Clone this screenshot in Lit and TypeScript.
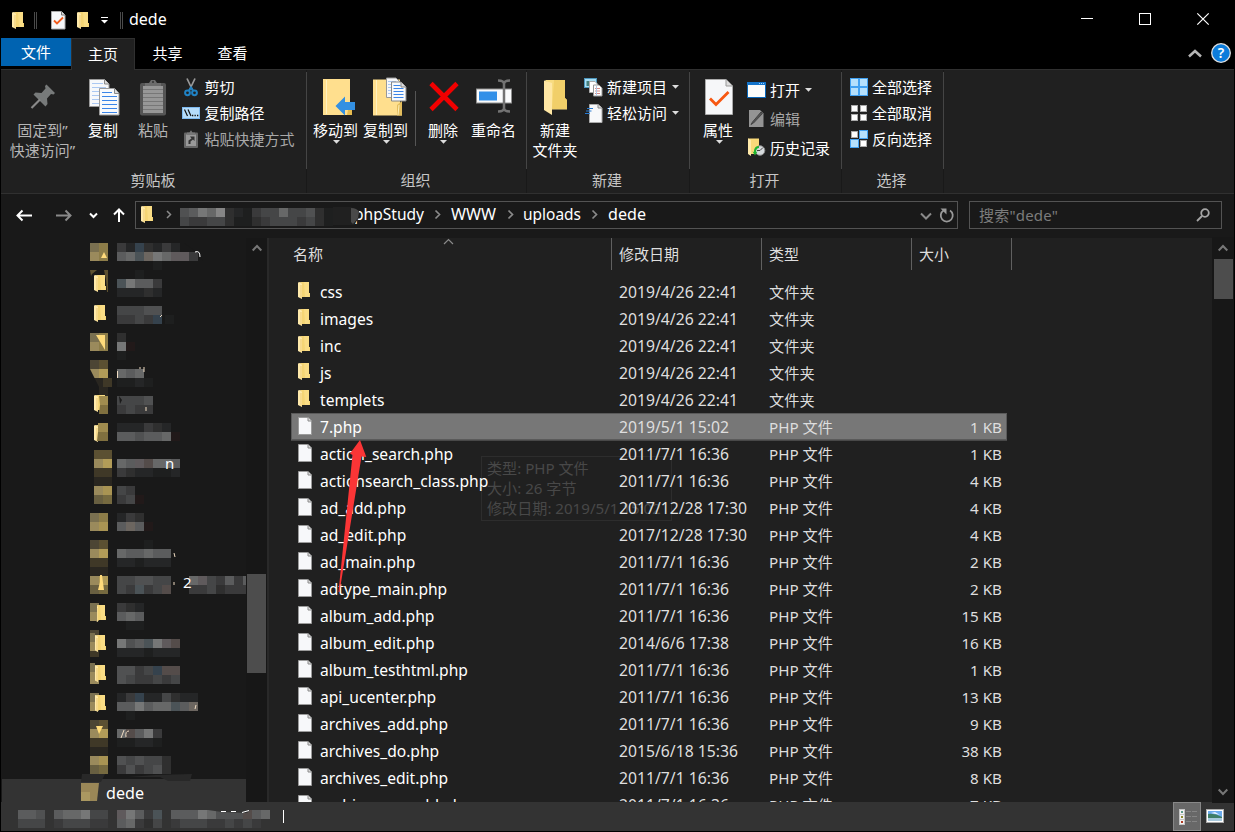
import { LitElement, html, css, svg } from "lit";
import { customElement } from "lit/decorators.js";

type Strip = [number, number, string];

/* Palette for the censor blocks, one letter per 9px cell. */
const TONES: Record<string, string> = {
  a: "#1e1f1f", b: "#252627", c: "#2f2f2f", d: "#3a3a3b", e: "#454647", f: "#505152",
  g: "#5b5c5d", h: "#676868", i: "#767777", j: "#868686",
  r: "#211919", s: "#4b5357", t: "#6c6660", u: "#544c4a", v: "#35424d", w: "#5f5a5c",
  A: "#7a7050", B: "#8d7d49", C: "#9a8a5c", D: "#b29c58", E: "#5b5032", F: "#4c4534",
  G: "#3f3827", H: "#292620", I: "#766a40", J: "#685f41", K: "#a99453",
};

const TREE: Strip[] = [
  [90, 243, "AB"], [90, 252, "CB"], [117, 243, "dbvcbdb"], [117, 252, "ghstihwwd"], [153, 261, "a"],
  [135, 270, "a"], [117, 279, "siggd"], [117, 288, "bbbcb"],
  [117, 306, "eeeff"], [117, 315, "ddedv"], [165, 315, "a"],
  [90, 333, "AB"], [90, 342, "CB"], [117, 333, "c"], [117, 342, "ir"], [117, 351, "a"],
  [90, 360, "FE"], [90, 369, "CD"], [94, 378, "HG"], [99, 387, "H"], [117, 369, "hgh"], [117, 378, "aaba"],
  [99, 396, "D"], [99, 405, "I"], [117, 396, "eeef"], [117, 405, "dedd"],
  [99, 423, "B"], [99, 432, "K"], [117, 423, "bbbdcb"], [117, 432, "ggfgghr"],
  [94, 450, "EE"], [94, 459, "CD"], [94, 468, "GG"], [94, 477, "HH"], [117, 459, "hgwuhhg"], [117, 468, "dcbbaab"],
  [94, 486, "CK"], [94, 495, "JI"], [117, 486, "ed"], [117, 495, "der"],
  [90, 513, "AB"], [90, 522, "CK"], [117, 513, "bdc"], [117, 522, "gtgr"],
  [90, 540, "FE"], [90, 549, "CD"], [90, 558, "GG"], [90, 567, "HH"], [144, 540, "a"], [117, 549, "hgghgg"], [117, 558, "bbabbb"],
  [90, 576, "CD"], [90, 585, "JI"], [117, 576, "eeffee"], [117, 585, "edsdeu"], [189, 576, "hwedgdgu"], [189, 585, "ddecddd"],
  [90, 603, "A"], [90, 612, "C"], [117, 603, "dcb"], [117, 612, "ghg"], [126, 621, "aa"],
  [90, 630, "F"], [90, 639, "C"], [90, 648, "G"], [117, 639, "ifgsiwu"], [117, 648, "bbbabbb"],
  [90, 666, "A"], [90, 675, "C"], [117, 666, "ffdevuu"], [117, 675, "feddede"],
  [90, 693, "A"], [90, 702, "C"], [117, 693, "bdvbbecbb"], [117, 702, "ggighhsgt"], [126, 711, "a"],
  [90, 720, "FE"], [90, 729, "CD"], [90, 738, "GG"], [90, 747, "HH"], [117, 729, "hugid"], [117, 738, "aabba"],
  [90, 756, "CK"], [90, 765, "JI"], [117, 756, "fefeec"], [117, 765, "dfdefc"],
];

const STATUS: Strip[] = [
  [18, 810, "ggf"], [54, 810, "ghhiee"], [117, 810, "wigds"], [171, 810, "gggihfffugh"],
  [18, 819, "eee"], [54, 819, "deeedd"], [117, 819, "ghdce"], [171, 819, "deeeddeded"],
];

const PATH: Strip[] = [
  [180, 208, "fgihjcbadeeheefca"], [180, 217, "eddeecaacdeeedeca"],
];

const cells = (strips: Strip[]) =>
  strips.map(([x, y, row]) =>
    [...row].map((c, i) => svg`<rect x=${x + i * 9} y=${y} width="9" height="9" fill=${TONES[c]}></rect>`));

const folderShape = svg`
  <path d="M2 0H11V11H12V15H3V2Z" fill="#f5d575"></path>
  <path d="M6 0H11V15H7Z" fill="#fadd85"></path>
  <path d="M0 .5L2 0L4 2V17L0 15Z" fill="#ffeaab"></path>
  <path d="M3 3V16" stroke="#e9bf58" stroke-width=".7"></path>`;

const folder = html`<svg width="12" height="17" viewBox="0 0 12 17">${folderShape}</svg>`;
const page = html`<svg width="14" height="18" viewBox="0 0 14 18">
  <path d="M.5 .5H10L13.500 4V17.500H.5Z" fill="#f7f8fa" stroke="#9b9b9b"></path>
  <path d="M10 .5V4H13.500" fill="#ddd" stroke="#8a8a8a"></path></svg>`;

const lines = (x: number, y: number, w: number, n: number, step: number, c: string) =>
  Array.from({ length: n }, (_, i) => svg`<path d="M${x} ${y + i * step}h${w}" stroke=${c}></path>`);

const icons = {
  pin: html`<svg width="26" height="26" viewBox="0 0 26 26"><path d="M16.500 .5L25 9L23.500 10.500L21 10L17 14.500L17.500 20L15.500 22.500L3.500 10.500L5.500 8.500L11.500 9L15.500 4.500L15 2Z" fill="#777a7a"></path><path d="M10 15.500L1.500 24" stroke="#898989" stroke-width="2.200"></path></svg>`,
  copy: html`<svg width="31" height="37" viewBox="0 0 31 37">
    <path d="M.5 .5H15.500L20 5V27.500H.5Z" fill="#f7f8fa" stroke="#9b9b9b"></path><path d="M15.500 .5V5H20" fill="#ddd" stroke="#888"></path>${lines(3, 4.5, 11, 1, 4, "#abc8f2")}${lines(3, 8.5, 14, 5, 4, "#abc8f2")}
    <path d="M10.500 9.500H25.500L30 14.500V36H10.500Z" fill="#f9fafc" stroke="#9b9b9b"></path>${lines(13, 13.5, 10, 1, 4, "#3b85e8")}${lines(13, 17.5, 15, 5, 4, "#3b85e8")}
    <path d="M25.500 9.500V14.500H30" fill="#ddd" stroke="#888"></path></svg>`,
  paste: html`<svg width="28" height="37" viewBox="0 0 28 37"><rect x="1" y="4" width="26" height="32.500" rx="2" fill="#555"></rect>
    <rect x="4" y="7" width="20" height="27" fill="#979797"></rect>${lines(4, 10.5, 20, 6, 4, "#777")}
    <path d="M6 7V4H10L12 1H16L18 4H22V7Z" fill="#6c6c6c"></path><circle cx="14" cy="3" r="1" fill="#333"></circle></svg>`,
  cut: html`<svg width="18" height="19" viewBox="0 0 18 19"><path d="M5 .5L10.500 12M13 .5L7.500 12" stroke="#999" stroke-width="1.700"></path>
    <circle cx="5.500" cy="14.800" r="2.400" fill="none" stroke="#2082c4" stroke-width="2"></circle><circle cx="12.500" cy="14.800" r="2.400" fill="none" stroke="#2082c4" stroke-width="2"></circle><path d="M7 12.500L9 9.500L11 12.500" fill="none" stroke="#2082c4" stroke-width="2"></path></svg>`,
  path: html`<svg width="18" height="12" viewBox="0 0 18 12"><rect x=".5" y=".5" width="17" height="11" fill="#b5dcfa" stroke="#7fbaf0"></rect><path d="M2.500 2.500L5.500 9M6 2.500L9 9" stroke="#111" stroke-width="1.200"></path><path d="M10 8.500h1.300M12.500 8.500h1.300M15 8.500h1.300" stroke="#111" stroke-width="1.300"></path></svg>`,
  shortcut: html`<svg width="14" height="18" viewBox="0 0 14 18"><rect x="0" y="2.500" width="14" height="15.500" rx="1" fill="#666"></rect><rect x="2" y="4.500" width="10" height="11.500" fill="#999"></rect><path d="M3 5V2.500H5.500L7 .3L8.500 2.500H11V5Z" fill="#777"></path><path d="M4.500 14V10.500L7.500 8.500L6 6.500H10.500V11L9 9.500L6.500 11.500V14Z" fill="#333"></path></svg>`,
  move: html`<svg width="33" height="38" viewBox="0 0 33 38"><path d="M0 37V1H27V26H29V37Z" fill="#ffdf8e"></path><path d="M3.500 2V36" stroke="#fff0c0"></path><path d="M26 26L29 24V37H24Z" fill="#e7bc50"></path><path d="M12.500 28L22 18.500V24H32V32H22V37.500Z" fill="#3390e2"></path></svg>`,
  copyto: html`<svg width="34" height="40" viewBox="0 0 34 40"><path d="M0 38.500V2.500H27V27H29V38.500Z" fill="#ffdf8e"></path><path d="M3.500 3V38" stroke="#fff0c0"></path><path d="M24 38.500V28L29 24V38.500Z" fill="#e3bd5d"></path><path d="M25 38L26 28" stroke="#fff0b9"></path>
    <path d="M13.500 1H23L28 6V20.500H13.500Z" fill="#f7f8fa" stroke="#999"></path>${lines(15, 4.5, 8, 5, 3, "#abc8f2")}
    <path d="M18.500 5H28L33 10V24H18.500Z" fill="#f8fafc" stroke="#888"></path>${lines(20.5, 8.5, 7, 1, 3, "#3b85e8")}${lines(20.5, 11.5, 10, 4, 3, "#3b85e8")}<path d="M28 5V10H33" fill="#ddd" stroke="#888"></path></svg>`,
  remove: html`<svg width="30" height="31" viewBox="0 0 30 31"><path d="M2 2.500L28 28.500M28 2.500L2 28.500" stroke="#f10000" stroke-width="4.600"></path></svg>`,
  rename: html`<svg width="37" height="34" viewBox="0 0 37 34"><rect x=".5" y="10" width="35" height="14" fill="#fafbfc" stroke="#8f8f8f"></rect><rect x="3" y="12.500" width="18" height="9" fill="#3290e8"></rect><path d="M22 1.500Q28 1.500 28 5Q28 1.500 34 1.500M28 4V30M22 32.500Q28 32.500 28 29Q28 32.500 34 32.500" fill="none" stroke="#737373" stroke-width="2.500"></path></svg>`,
  newfolder: html`<svg width="23" height="35" viewBox="0 0 23 35"><path d="M1 0H21V18L23 20V29.500H7V8Z" fill="#f8dc80"></path><path d="M10 0H21V18L23 20V29H8Z" fill="#f1cf69"></path><path d="M0 .5L8 3V35L0 30Z" fill="#ffe7a4"></path></svg>`,
  newitem: html`<svg width="19" height="19" viewBox="0 0 19 19"><rect x=".5" y=".5" width="12" height="9" fill="#a6def5" stroke="#4e97bd"></rect><rect x="2.500" y="3" width="5" height="5" fill="#457e7a"></rect><path d="M5.500 3.500H11L13.500 6V14.500H5.500Z" fill="#fff" stroke="#aaa"></path><path d="M9.500 7H15L18 10V18H9.500Z" fill="#fff" stroke="#999"></path>${lines(11, 10.5, 5, 3, 2.5, "#d58f8a")}<path d="M12.500 8V18" stroke="#b2c8e6"></path></svg>`,
  easy: html`<svg width="18" height="19" viewBox="0 0 18 19"><path d="M4.500 .5H13L17 4V18.500H4.500Z" fill="#f7f8fa" stroke="#aaa"></path><path d="M13 .5V4H17" fill="#ddd" stroke="#888"></path><path d="M2 4.500H8M1 7H6.500M0 9.500H5" stroke="#287ad0" stroke-width="1.200"></path></svg>`,
  props: html`<svg width="28" height="36" viewBox="0 0 28 36"><path d="M.5 .5H21L27.500 7V35.500H.5Z" fill="#f6f7f9" stroke="#aaa"></path><path d="M21 .5V7H27.500" fill="#ddd" stroke="#999"></path><path d="M5 19.500L11 25.500L23.500 13" fill="none" stroke="#f75812" stroke-width="2.800"></path></svg>`,
  smallprops: html`<svg width="15" height="19" viewBox="0 0 15 19"><path d="M.5 .5H10.500L14 4V18H.5Z" fill="#f6f7f9" stroke="#aaa"></path><path d="M10.500 .5V4H14" stroke="#777" fill="#ddd"></path><path d="M3 9.500L6 12.500L12 6.500" fill="none" stroke="#f25c1d" stroke-width="1.800"></path></svg>`,
  open: html`<svg width="19" height="16" viewBox="0 0 19 16"><rect x=".5" y=".5" width="18" height="15" fill="#fdfdfa" stroke="#0967b9"></rect><path d="M0 1.500H19" stroke="#1474c9" stroke-width="3"></path><path d="M12 1.500h1M14 1.500h1M16 1.500h1" stroke="#9bd1ff"></path></svg>`,
  edit: html`<svg width="17" height="19" viewBox="0 0 17 19"><path d="M1 1H12L15.500 4.500V18H1Z" fill="#949494"></path><path d="M14.500 4.500L5.500 14L3 15.500L4.500 13L13 3Z" fill="#555" stroke="#444"></path></svg>`,
  history: html`<svg width="18" height="19" viewBox="0 0 18 19"><path d="M0 .5H11V16H4L0 16Z" fill="#f9d979"></path><path d="M0 .5L3 2V18L0 16Z" fill="#ffeaaa"></path><circle cx="12" cy="12.500" r="4.800" fill="#d6dadd" stroke="#888"></circle><path d="M12 12.500L15 9.500M12 12.500H9" stroke="#444"></path><path d="M11 8C7 8 6 11 6 14L4.500 13.500L7 17.500L9.500 13.500L8 14C8 12 9 10 11 10Z" fill="#20b52f"></path></svg>`,
};

const squares = (on: boolean[]) => html`<svg width="18" height="18" viewBox="0 0 18 18">${on.map((v, i) => {
  const x = (i % 2) * 9, y = (i >> 1) * 9;
  return v
    ? svg`<rect x=${x + 0.5} y=${y + 0.5} width="8" height="8" fill="#b5e0fc" stroke="#42a1f1"></rect>`
    : svg`<rect x=${x + 1.5} y=${y + 1.5} width="6" height="6" fill="#fdfdfd" stroke="#aaa"></rect>`;
})}</svg>`;

const caret = html`<svg class="caret" width="7" height="4" viewBox="0 0 7 4"><path d="M0 0H7L3.500 3.700Z" fill="#ddd"></path></svg>`;
const chevron = (w: number, h: number, d: string, c: string, s = 1.5) =>
  html`<svg width=${w} height=${h} viewBox="0 0 ${w} ${h}"><path d=${d} fill="none" stroke=${c} stroke-width=${s}></path></svg>`;
const up = (c = "#777", s = 2) => chevron(10, 8, "M.7 6.500L5 2L9.300 6.500", c, s);

const FILES: [string, string, string?][] = [
  ["css", "2019/4/26 22:41"], ["images", "2019/4/26 22:41"], ["inc", "2019/4/26 22:41"],
  ["js", "2019/4/26 22:41"], ["templets", "2019/4/26 22:41"],
  ["7.php", "2019/5/1 15:02", "1 KB"], ["action_search.php", "2011/7/1 16:36", "1 KB"],
  ["actionsearch_class.php", "2011/7/1 16:36", "4 KB"], ["ad_add.php", "2017/12/28 17:30", "4 KB"],
  ["ad_edit.php", "2017/12/28 17:30", "4 KB"], ["ad_main.php", "2011/7/1 16:36", "2 KB"],
  ["adtype_main.php", "2011/7/1 16:36", "2 KB"], ["album_add.php", "2011/7/1 16:36", "15 KB"],
  ["album_edit.php", "2014/6/6 17:38", "16 KB"], ["album_testhtml.php", "2011/7/1 16:36", "1 KB"],
  ["api_ucenter.php", "2011/7/1 16:36", "13 KB"], ["archives_add.php", "2011/7/1 16:36", "9 KB"],
  ["archives_do.php", "2015/6/18 15:36", "38 KB"], ["archives_edit.php", "2011/7/1 16:36", "8 KB"],
  ["archives_sg_add.php", "2011/7/1 16:36", "7 KB"],
];

const big = (cls: string, icon: unknown, label: unknown, arrow = false) =>
  html`<div class="big ${cls}"><div class="pic">${icon}</div><div class="cap">${label}</div>${arrow ? caret : ""}</div>`;
const small = (icon: unknown, label: string, arrow = false, dim = false) =>
  html`<div class="small ${dim ? "dim" : ""}"><span class="sico">${icon}</span><span>${label}</span>${arrow ? caret : ""}</div>`;

@customElement("app-root")
export class AppRoot extends LitElement {
  static styles = css`
    :host { display: block; width: 1235px; height: 832px; }
    * { box-sizing: border-box; }
    svg { display: block; flex: none; overflow: visible; }
    .win { position: relative; width: 1235px; height: 832px; overflow: hidden; background: #000; color: #fff; padding: 0 1px 1px; display: flex; flex-direction: column; font: 15px/20px "Noto Sans", "Noto Sans CJK SC", sans-serif; white-space: nowrap; }
    .lat { font-size: 16px; }
    .title { height: 38px; display: flex; align-items: center; padding: 2px 25px 0 11px; }
    .vbar { width: 3px; height: 17px; border: 1px solid #4a4a4a; border-width: 0 1px; margin-right: -1px; }
    .quick { display: flex; align-items: center; height: 100%; flex: 1; }
    .quick .lat { padding-bottom: 2px; }
    .q1 { margin-left: 10px; } .q2 { margin-left: 15px; } .q3 { margin: 0 12px 0 11px; } .q4 { margin: 0 6px 0 12px; }
    .controls { display: flex; align-items: center; gap: 46px; padding-bottom: 2px; }
    .tabs { height: 32px; display: flex; border-bottom: 1px solid #303030; }
    .tab { display: flex; align-items: center; justify-content: center; width: 65px; height: 32px; padding-bottom: 3px; }
    .tab.file { width: 70px; height: 28px; background: #0063b1; padding: 0; }
    .tab.home { width: 64px; background: #202020; border: 1px solid #303030; border-bottom: 0; padding-bottom: 2px; }
    .help { margin-left: auto; display: flex; align-items: center; gap: 9px; padding: 0 3px 1px 0; }
    .ribbon { height: 124px; background: #202020; border-bottom: 1px solid #303030; display: flex; }
    .group { height: 123px; display: flex; flex-direction: column; position: relative; border-right: 1px solid #191919; padding-top: 4px; }
    .group::after { content: ""; position: absolute; right: -1px; top: 2px; width: 1px; height: 97px; background: #454545; }
    .body { height: 96px; display: flex; }
    .glabel { text-align: center; color: #c6c6c6; height: 20px; padding-right: 2px; }
    .g1 { width: 306px; } .g2 { width: 220px; padding-left: 4px; } .g3 { width: 163px; } .g4 { width: 152px; } .g5 { width: 102px; }
    .g1 .glabel { padding-right: 1px; }
    .g2 .glabel { margin-left: -4px; }
    .big { width: 50px; display: flex; flex-direction: column; align-items: center; position: relative; text-align: center; }
    .pic { height: 46px; display: flex; align-items: center; }
    .big .caret { position: absolute; top: 66px; left: 50%; margin-left: -3px; }
    .pinb { width: 77px; padding-left: 6px; color: #b5b5b5; }
    .copyb .pic { padding-left: 2px; }
    .pasteb { color: #b5b5b5; }
    .moveb .pic { padding-left: 6px; } .copytob .pic { padding: 0 0 1px 8px; }
    .delb { width: 50px; margin-left: 2px; } .renb { width: 51px; }
    .delb .pic, .renb .pic { padding: 0 0 2px 1px; }
    .moveb .cap { margin-left: -1px; } .copytob .cap { margin-left: -1px; }
    .newb { width: 57px; }
    .newb .pic { padding-left: 0; }
    .newb .cap { margin-left: -1px; }
    .propb { width: 57px; }
    .propb .cap { margin-left: -1px; }
    .split { width: 1px; height: 55px; margin: 17px 0 0 4px; background: #555; }
    .col { display: flex; flex-direction: column; padding-left: 4px; }
    .newcol { padding-left: 0; }
    .small { height: 26px; display: flex; align-items: center; }
    .sico { width: 19px; margin-right: 4px; display: flex; justify-content: center; }
    .small .caret { margin-left: 5px; }
    .g1 .sico, .g5 .sico { margin: 0 4px 0 -1px; }
    .g1 .small { padding-left: .5px; }
    .dim { color: #a8a8a8; }
    .g4 .small { height: 29px; }
    .g4 .col { padding-left: 0; padding-top: 1px; }
    .g5 .col { padding-left: 8px; }
    .nav { height: 44px; background: #191919; display: flex; align-items: center; padding: 0 12px 2px 15px; }
    .arrows { width: 119px; display: flex; align-items: center; }
    .arrows svg:nth-child(2) { margin-left: 24px; } .arrows svg:nth-child(3) { margin-left: 17px; } .arrows svg:nth-child(4) { margin-left: 15px; }
    .addr { position: relative; width: 823px; height: 28px; border: 1px solid #535353; display: flex; align-items: center; padding: 0 2px 0 5px; font-size: 16px; }
    .search { width: 253px; height: 28px; margin-left: 11px; border: 1px solid #535353; display: flex; align-items: center; justify-content: space-between; padding: 0 11px 0 9px; color: #7c7c7c; }
    .search span { letter-spacing: .2px; }
    .main { height: 564px; display: flex; background: #202020; position: relative; }
    .side { width: 245px; background: #191919; }
    .bar { width: 21px; background: #171717; display: flex; flex-direction: column; align-items: center; }
    .bar.left { padding-top: 6px; }
    .edge { width: 2px; margin-right: 1px; background: #292929; }
    .lthumb { width: 19px; height: 99px; margin-top: 322px; background: #4d4d4d; }
    .rbar { width: 20px; margin: 0 1px 0 auto; padding: 6px 0 6px; outline: 1px solid #171717; }
    .rthumb { width: 19px; height: 40px; margin-top: 7px; background: #4d4d4d; }
    .rbar svg:last-child { margin-top: auto; }
    .files { width: 744px; padding-left: 21px; overflow: hidden; }
    .head { display: flex; height: 32px; margin-bottom: 8px; color: #dedede; }
    .head div { flex: none; border-right: 1px solid #606060; padding: 6px 0 0 7px; width: 150px; }
    .head .hn { width: 322px; padding-left: 3px; margin-left: -1px; position: relative; }
    .head .hs { width: 100px; }
    .sort { position: absolute; left: 153px; top: 0; }
    .row { width: 716px; height: 27px; display: flex; align-items: center; padding-left: 7px; color: #dedede; position: relative; }
    .row.sel { background: #777; box-shadow: inset 0 0 0 1px #5a5a5a, 0 1px #484848; }
    .ric { width: 22px; padding-bottom: 2px; }
    .name { width: 299px; font-size: 15.6px; color: #fff; }
    .date { width: 150px; font-size: 15.72px; }
    .type { width: 150px; font-size: 15.2px; }
    .size { width: 83px; text-align: right; font-size: 15.2px; }
    .tip { position: absolute; left: 480px; top: 218px; width: 191px; height: 65px; border: 1px solid #2d2d2d; padding: 1px 5px; color: #484848; font-size: 15.1px; }
    .arrow { position: absolute; left: 337px; top: 202px; }
    .status { height: 29px; background: #333; display: flex; justify-content: space-between; }
    .views { display: flex; width: 61px; }
    .v1 { width: 28px; height: 29px; border: 1px solid #888; background: #686868; padding: 6px 0 0 5px; }
    .v2 { padding: 7px 0 0 5px; }
  `;

  render() {
    return html`<div class="win">
      <div class="title">
        <div class="quick">${folder}<i class="vbar q1"></i><span class="q2">${icons.smallprops}</span>
          <span class="q3">${folder}</span>
          <svg width="7" height="7" viewBox="0 0 7 7"><path d="M0 .5H7" stroke="#fff"></path><path d="M0 3H7L3.500 6.500Z" fill="#fff"></path></svg>
          <i class="vbar q4"></i><span class="lat">dede</span></div>
        <div class="controls">
          <svg width="12" height="12" viewBox="0 0 12 12"><path d="M0 5.500H12" stroke="#fff"></path></svg>
          <svg width="12" height="12" viewBox="0 0 12 12"><rect x=".5" y=".5" width="11" height="11" fill="none" stroke="#fff"></rect></svg>
          <svg width="12" height="12" viewBox="0 0 12 12"><path d="M.3 .3L11.700 11.700M11.700 .3L.3 11.700" stroke="#fff" stroke-width="1.200"></path></svg>
        </div>
      </div>
      <div class="tabs">
        <div class="tab file">文件</div><div class="tab home">主页</div><div class="tab">共享</div><div class="tab">查看</div>
        <div class="help">${chevron(14, 9, "M1 7.500L7 2L13 7.500", "#b5b5b5", 2.5)}
          <svg width="20" height="20" viewBox="0 0 20 20"><circle cx="10" cy="10" r="9.300" fill="#0c7cdb" stroke="#e0e0e0" stroke-width="1.300"></circle><text x="10" y="15" text-anchor="middle" font-size="14" font-weight="600" fill="#fff">?</text></svg>
        </div>
      </div>
      <div class="ribbon">
        <div class="group g1"><div class="body">
          ${big("pinb", icons.pin, html`固定到”<br>快速访问”`)}${big("copyb", icons.copy, "复制")}${big("pasteb", icons.paste, "粘贴")}
          <div class="col">${small(icons.cut, "剪切")}${small(icons.path, "复制路径")}${small(icons.shortcut, "粘贴快捷方式", false, true)}</div>
        </div><div class="glabel">剪贴板</div></div>
        <div class="group g2"><div class="body">
          ${big("moveb", icons.move, "移动到", true)}${big("copytob", icons.copyto, "复制到", true)}<i class="split"></i>
          ${big("delb", icons.remove, "删除", true)}${big("renb", icons.rename, "重命名")}
        </div><div class="glabel">组织</div></div>
        <div class="group g3"><div class="body">
          ${big("newb", icons.newfolder, html`新建<br>文件夹`)}
          <div class="col newcol">${small(icons.newitem, "新建项目", true)}${small(icons.easy, "轻松访问", true)}</div>
        </div><div class="glabel">新建</div></div>
        <div class="group g4"><div class="body">
          ${big("propb", icons.props, "属性", true)}
          <div class="col">${small(icons.open, "打开", true)}${small(icons.edit, "编辑", false, true)}${small(icons.history, "历史记录")}</div>
        </div><div class="glabel">打开</div></div>
        <div class="group g5"><div class="body">
          <div class="col">${small(squares([true, true, true, true]), "全部选择")}${small(squares([false, false, false, false]), "全部取消")}${small(squares([false, true, true, false]), "反向选择")}</div>
        </div><div class="glabel">选择</div></div>
      </div>
      <div class="nav">
        <div class="arrows">
          ${chevron(16, 12, "M16 6.500H1.500M6.500 1.500L1.500 6.500L6.500 11.500", "#fff", 2)}
          ${chevron(16, 12, "M0 6.500H14.500M9.500 1.500L14.500 6.500L9.500 11.500", "#8a8a8a", 2)}
          ${chevron(9, 7, "M1 1.500L4.500 5L8 1.500", "#fff", 2)}
          ${chevron(12, 14, "M6 14V1.500M1 6.500L6 1.500L11 6.500", "#fff", 2)}
        </div>
        <div class="addr">
          <svg width="774" height="26" viewBox="141 202 774 26">
            <g transform="translate(141 206)">${folderShape}</g>
            <path d="M167 211L170.500 214.500L167 218" fill="none" stroke="#8a8a8a" stroke-width="1.500"></path>
            <text x="354" y="220" font-size="16" fill="#fff" textLength="70" lengthAdjust="spacingAndGlyphs">phpStudy</text>
            ${cells(PATH)}
            <path d="M333 207H351L359 211L358 219L354 225H333Z" fill="#202020"></path><path d="M351 208Q357 208 359 212L358 218L353 224L351 222Z" fill="#494949"></path>
            <path d="M435.500 210.500L439.500 214.500L435.500 218.500M508.500 210.500L512.500 214.500L508.500 218.500M592.500 210.500L596.500 214.500L592.500 218.500" fill="none" stroke="#8a8a8a" stroke-width="1.700"></path>
            <text x="451" y="220" font-size="16" fill="#fff" textLength="45" lengthAdjust="spacingAndGlyphs">WWW</text>
            <text x="523" y="220" font-size="16" fill="#fff" textLength="58" lengthAdjust="spacingAndGlyphs">uploads</text>
            <text x="608" y="220" font-size="16" fill="#fff" textLength="38" lengthAdjust="spacingAndGlyphs">dede</text>
          </svg>
          <svg width="36" height="18" viewBox="0 0 36 18"><path d="M6 7.500L11 12.500L16 7.500" fill="none" stroke="#8a8a8a" stroke-width="2"></path><path d="M28.500 4.500A6 6 0 1 0 35 4.500" fill="none" stroke="#999" stroke-width="1.800"></path><path d="M25.500 2.500H31.500V8.500Z" fill="#999"></path></svg>
        </div>
        <div class="search"><span>搜索"dede"</span>
          <svg width="14" height="14" viewBox="0 0 14 14"><circle cx="9" cy="5" r="3.800" fill="none" stroke="#a5a5a5" stroke-width="1.800"></circle><path d="M6 8L1 13" stroke="#a5a5a5" stroke-width="1.800"></path></svg></div>
      </div>
      <div class="main">
        <div class="side">
          <svg width="245" height="564" viewBox="1 238 245 564">
            <path d="M2 779H246V802H2Z" fill="#333"></path>
            <path d="M82 774H105L101 782H81ZM128 777L155 775L192 774L190 781H168L160 777Z" fill="#282828"></path>
            ${cells(TREE)}
            ${[[275, 0], [305, 0], [395, 0], [425, 0], [605, 3], [635, 1], [665, 1], [695, 1]].map(([y, cut]) => svg`<g transform="translate(94 ${y})">${folderShape}</g>${cut ? svg`<rect x="90" y=${y - 2} width=${cut + 4} height="9" fill=${TONES.A}></rect><rect x="90" y=${y + 7} width=${cut + 4} height="9" fill=${TONES.C}></rect>` : ""}`)}
            <path d="M99 396H108V405H100ZM98 423H108V432H98Z" fill="#a08c4f"></path><path d="M100 405H108V414H99ZM98 432H108V441H97Z" fill="#80703f"></path>
            <path d="M90 270H97L92 274L91 276ZM104 270H108V292H107L106 280Z" fill="#5d5130"></path>
            <path d="M101 258L104 252L107 258ZM96 335H105V350ZM98 590L100 582V575H102L104 590ZM96 726H103L99 734Z" fill="#ffdb7b"></path>
            <path d="M184 243H203V261L198 253Z" fill="#191919"></path>
            <path d="M90 369L99 387H90ZM90 495L92 504H90ZM119 396L122 400L120 404Z" fill="#191919"></path>
            <g font-size="15" fill="#fff">
              <text x="183" y="588">2</text><text x="165" y="469">n</text>
            </g>
            <path d="M195 252Q200 250 200 257" fill="none" stroke="#fff"></path>
            <path d="M160 317L162 315M117.500 371V378M139 368h2M144 367v5M146 407v4M174 553l1 4M174 582v3M196 705L195 709M121 738L124 730M129 731Q125 731 126 737" fill="none" stroke="#f0dcc2"></path>
            <path d="M81 783H99L97 801H81Z" fill="#9a8757"></path><path d="M81 792H90V801H81Z" fill="#aa9861"></path>
            <text x="106" y="799" font-size="16" fill="#fff" textLength="38" lengthAdjust="spacingAndGlyphs">dede</text>
          </svg>
        </div>
        <div class="bar left">${up()}<i class="lthumb"></i></div><i class="edge"></i>
        <div class="tip">类型: PHP 文件<br>大小: 26 字节<br>修改日期: 2019/5/1 15:02</div>
        <div class="files">
          <div class="head"><div class="hn">名称<span class="sort">${chevron(11, 7, "M1 6L5.500 1.500L10 6", "#8a8a8a", 1.2)}</span></div><div>修改日期</div><div>类型</div><div class="hs">大小</div></div>
          ${FILES.map(([n, d, s], i) => html`<div class="row ${i === 5 ? "sel" : ""}"><span class="ric">${s ? page : folder}</span><span class="name">${n}</span><span class="date">${d}</span><span class="type">${s ? "PHP 文件" : "文件夹"}</span><span class="size">${s ?? ""}</span></div>`)}
        </div>
        <svg class="arrow" width="30" height="154" viewBox="338 440 30 154"><path d="M360 440L366.300 457L361.500 456.500L339.500 592L338.500 592L352.500 455L350 453.500Z" fill="#fb3536"></path></svg>
        <div class="bar rbar">${up()}<i class="rthumb"></i>${chevron(10, 8, "M.7 1.500L5 6L9.300 1.500", "#777", 2)}</div>
      </div>
      <div class="status">
        <svg width="290" height="29" viewBox="1 802 290 29">${cells(STATUS)}
          <path d="M208 810H250L247 813L222 812Z" fill="#333"></path><path d="M221 811.500h5M231 811.500h5M242 812.500L249 810.500" stroke="#fff"></path>
          <path d="M283.500 810V823" stroke="#fff"></path></svg>
        <div class="views">
          <div class="v1"><svg width="19" height="16" viewBox="0 0 19 16">${["#5c9a8b", "#8d8a2f", "#b33a22"].map((c, i) => svg`<rect x=".5" y=${i * 5 + 0.5} width="5" height="5" fill="#f2f2f2" stroke="#c4c4c4"></rect><rect x="2" y=${i * 5 + 2} width="2" height="2" fill=${c}></rect><path d="M7 ${i * 5 + 2.5}h5M13 ${i * 5 + 2.5}h5" stroke="#858585"></path>`)}</svg></div>
          <div class="v2"><svg width="18" height="14" viewBox="0 0 18 14"><rect x=".5" y=".5" width="17" height="13" fill="#fff" stroke="#aaa"></rect><rect x="2" y="2" width="14" height="10" fill="#6cabed"></rect><path d="M2 5Q9 4 16 8V12H2Z" fill="#3f7e67"></path><path d="M2 9H16V12H2Z" fill="#a8c9dc"></path><path d="M5 4L9 3L14 6L10 5Z" fill="#edf6ff"></path></svg></div>
        </div>
      </div>
    </div>`;
  }
}
